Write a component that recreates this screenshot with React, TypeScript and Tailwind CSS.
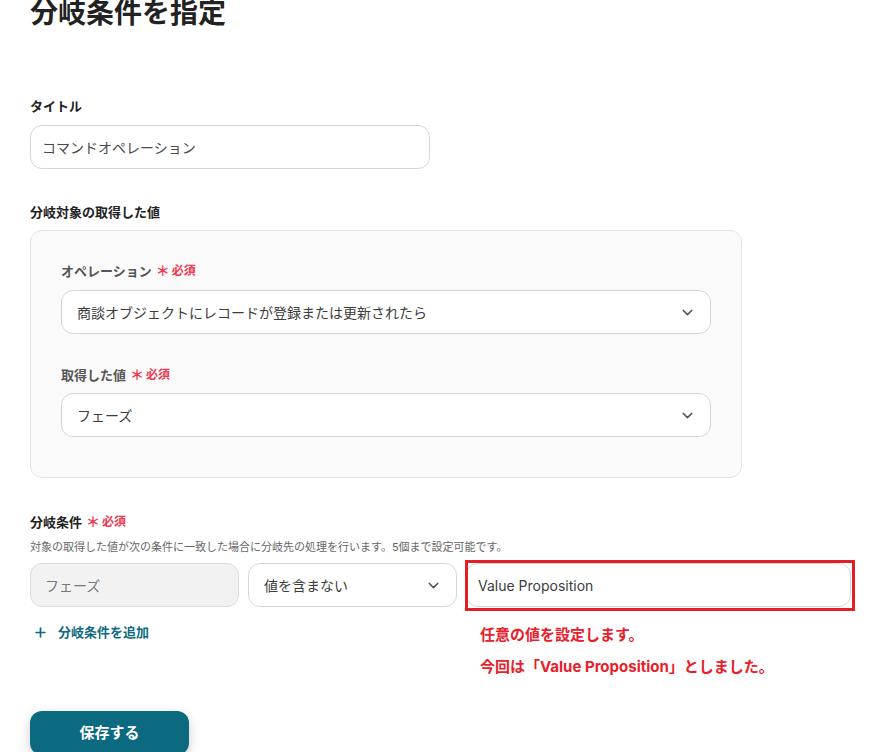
import { ChevronDown, Plus } from "lucide-react";

const font = { fontFamily: 'Inter, "Noto Sans CJK JP", "Noto Sans", sans-serif' };

function Required() {
  return (
    <span className="ml-1 inline-flex items-center gap-0.5 text-[12px] font-bold text-[#f0364f]">
      <span className="text-[14px] leading-none">＊</span>必須
    </span>
  );
}

function SelectBox({ value, className = "" }: { value: string; className?: string }) {
  return (
    <div
      className={`flex h-[44px] items-center justify-between rounded-[12px] border border-[#d3d6dc] bg-white pl-[15px] pr-[14px] ${className}`}
    >
      <span className="text-[14px] text-[#3c3c3c]">{value}</span>
      <ChevronDown size={17} strokeWidth={2} className="text-[#555]" />
    </div>
  );
}

export default function App() {
  return (
    <div className="min-h-[752px] w-[870px] overflow-hidden bg-white pl-[30px]" style={font}>
      <h1 className="-mt-[1px] text-[28px] font-bold leading-[28px] text-[#222]">分岐条件を指定</h1>

      <div className="mt-[69px] text-[13px] font-bold leading-[20px] text-[#222]">タイトル</div>
      <div className="mt-[9px] flex h-[44px] w-[400px] items-center rounded-[12px] border border-[#d3d6dc] bg-white px-[11px]">
        <span className="text-[14px] text-[#4a4a4a]">コマンドオペレーション</span>
      </div>

      <div className="mt-[33px] text-[13px] font-bold leading-[20px] text-[#222]">分岐対象の取得した値</div>
      <div className="mt-[8px] w-[712px] rounded-[12px] border border-[#e3e4e8] bg-[#fafafa] px-[30px] pb-[40px] pt-[30px]">
        <div className="flex items-center text-[13px] font-bold leading-[20px] text-[#555]">
          オペレーション
          <Required />
        </div>
        <SelectBox className="mt-[9px]" value="商談オブジェクトにレコードが登録または更新されたら" />
        <div className="mt-[31px] flex items-center text-[13px] font-bold leading-[20px] text-[#555]">
          取得した値
          <Required />
        </div>
        <SelectBox className="mt-[8px]" value="フェーズ" />
      </div>

      <div className="mt-[34px] flex items-center text-[13px] font-bold leading-[20px] text-[#222]">
        分岐条件
        <Required />
      </div>
      <div className="mt-[7px] text-[11px] leading-[16px] text-[#666]">
        対象の取得した値が次の条件に一致した場合に分岐先の処理を行います。5個まで設定可能です。
      </div>

      <div className="mt-[8px] flex gap-[9px]">
        <div className="flex h-[44px] w-[209px] items-center rounded-[12px] border border-[#dcdcdc] bg-[#f2f2f2] px-[14px]">
          <span className="text-[14px] text-[#777]">フェーズ</span>
        </div>
        <SelectBox className="w-[209px]" value="値を含まない" />
        <div className="relative w-[385px]">
          <div className="flex h-[44px] items-center rounded-[12px] border border-[#d3d6dc] bg-white px-[11px]">
            <span className="text-[14px] text-[#3c3c3c]">Value Proposition</span>
          </div>
          <div className="pointer-events-none absolute -bottom-[4px] -left-[1px] -right-[4px] -top-[3px] border-[3px] border-[#e41e26]" />
          <div className="absolute left-[14px] top-[56px] text-[15px] font-bold leading-[32px] text-[#e8202a]">
            <div>任意の値を設定します。</div>
            <div>今回は「Value Proposition」としました。</div>
          </div>
        </div>
      </div>

      <div className="mt-[15px] flex items-center gap-[10px] pl-[3px] text-[13px] font-bold leading-[20px] text-[#0e6a80]">
        <Plus size={15} strokeWidth={2.6} />
        分岐条件を追加
      </div>

      <button
        type="button"
        className="mt-[69px] flex h-[44px] w-[159px] items-center justify-center rounded-[12px] bg-[#0b6a80] text-[15px] font-bold text-white shadow-[0_4px_12px_rgba(0,0,0,0.2)]"
      >
        保存する
      </button>
    </div>
  );
}
